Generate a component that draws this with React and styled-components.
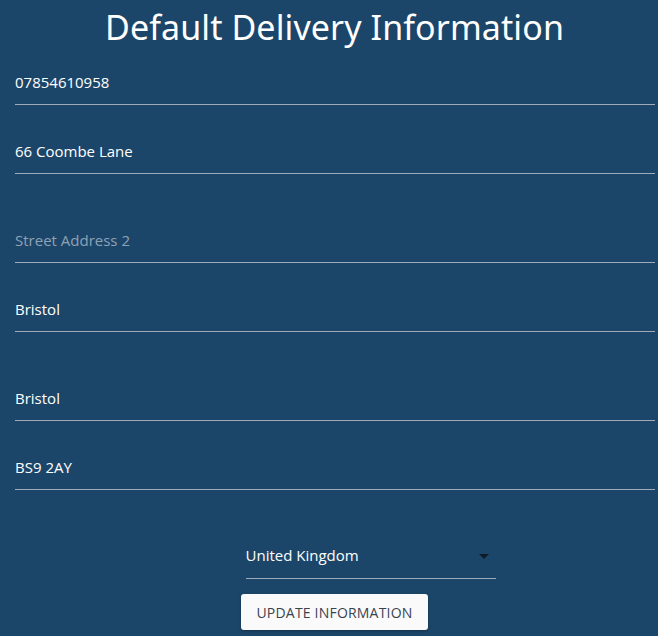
import React from "react";
import styled, { createGlobalStyle } from "styled-components";

const GlobalStyle = createGlobalStyle`
  html, body {
    margin: 0;
    padding: 0;
    background: #1c4669;
  }
  body {
    font-family: "Open Sans", "Noto Sans", sans-serif;
    color: #ffffff;
  }
`;

const Page = styled.div`
  width: 658px;
  height: 636px;
  background: #1c4669;
  overflow: hidden;
`;

const Title = styled.h1`
  margin: 0;
  height: 54px;
  line-height: 54px;
  text-align: center;
  font-family: "Noto Sans", "Open Sans", sans-serif;
  font-weight: 400;
  font-size: 34px;
  letter-spacing: 0.1px;
  color: #ffffff;
  padding-left: 11px;
`;

const Form = styled.form`
  display: flex;
  flex-direction: column;
  padding: 8px 3px 0 15px;
`;

const Field = styled.div`
  margin-top: ${(p) => (p.$spaced ? "46px" : p.$first ? "0" : "26px")};
  border-bottom: 1px solid #9eabb8;
`;

const Input = styled.input`
  display: block;
  width: 100%;
  box-sizing: border-box;
  height: 42px;
  padding: 0 0 2px 0;
  border: none;
  outline: none;
  background: transparent;
  font-family: "Open Sans", "Noto Sans", sans-serif;
  font-size: 15px;
  color: #ffffff;
  &::placeholder {
    color: #8ea2b6;
    opacity: 1;
  }
`;

const SelectRow = styled.div`
  display: flex;
  justify-content: center;
  margin-top: 47px;
`;

const SelectBox = styled.div`
  width: 250px;
  margin-left: 71px;
  height: 42px;
  border-bottom: 1px solid #9eabb8;
  display: flex;
  align-items: flex-start;
  justify-content: space-between;
  padding-right: 7px;
  box-sizing: border-box;
`;

const SelectText = styled.span`
  font-size: 15px;
  color: #ffffff;
  line-height: 36px;
`;

const Caret = styled.span`
  width: 0;
  height: 0;
  border-left: 5px solid transparent;
  border-right: 5px solid transparent;
  border-top: 5px solid #0e1a26;
  margin-top: 17px;
`;

const ButtonRow = styled.div`
  display: flex;
  justify-content: center;
  margin-top: 15px;
  padding-right: 1px;
`;

const Button = styled.button`
  height: 36px;
  width: 187px;
  border: none;
  border-radius: 3px;
  background: #fafafa;
  box-shadow: 0 1px 3px rgba(0, 0, 0, 0.3);
  font-family: "Open Sans", "Noto Sans", sans-serif;
  font-size: 14px;
  letter-spacing: 0.2px;
  color: #3a4350;
  text-transform: uppercase;
  cursor: pointer;
  padding: 0;
`;

const fields = [
  { value: "07854610958" },
  { value: "66 Coombe Lane" },
  { value: "", placeholder: "Street Address 2", spaced: true },
  { value: "Bristol" },
  { value: "Bristol", spaced: true },
  { value: "BS9 2AY" },
];

export default function App() {
  return (
    <Page>
      <GlobalStyle />
      <Title>Default Delivery Information</Title>
      <Form onSubmit={(e) => e.preventDefault()}>
        {fields.map((f, i) => (
          <Field key={i} $first={i === 0} $spaced={f.spaced}>
            <Input
              defaultValue={f.value}
              placeholder={f.placeholder}
            />
          </Field>
        ))}
        <SelectRow>
          <SelectBox>
            <SelectText>United Kingdom</SelectText>
            <Caret />
          </SelectBox>
        </SelectRow>
        <ButtonRow>
          <Button type="submit">Update Information</Button>
        </ButtonRow>
      </Form>
    </Page>
  );
}
